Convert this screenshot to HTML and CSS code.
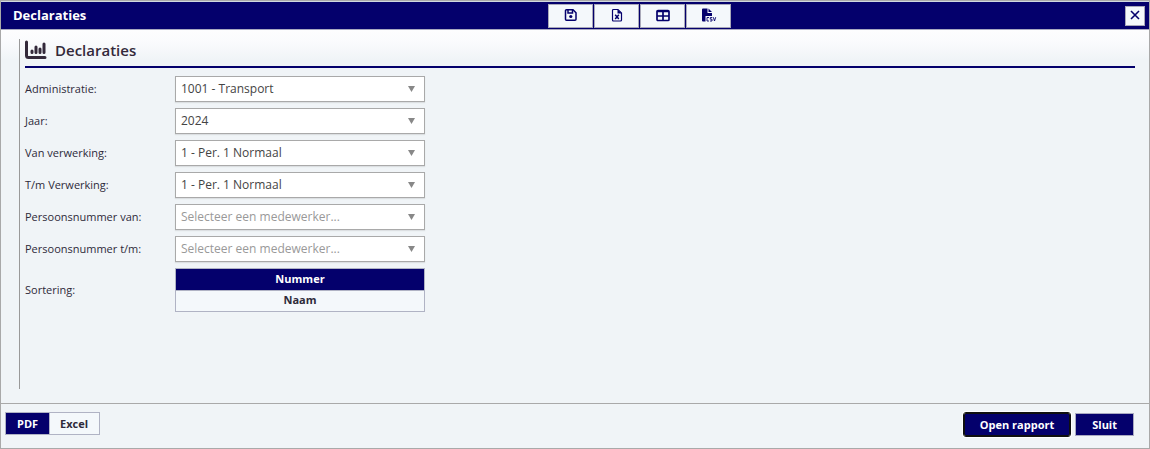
FILE: index.html
```html
<!DOCTYPE html>
<html lang="nl">
<head>
    <meta charset="UTF-8">
    <meta name="viewport" content="width=device-width, initial-scale=1.0">
    <title>Declaraties</title>
    <link rel="stylesheet" href="styles.css">
</head>
<body>
    <div class="window">
        <!-- title bar with export buttons -->
        <header class="titlebar">
            <h1 class="titlebar-title">Declaraties</h1>
            <div class="toolbar">
                <button type="button" class="tool-btn" aria-label="Opslaan">
                    <svg width="14" height="14" viewBox="0 0 14 14" fill="none" stroke="currentColor" stroke-width="1.5">
                        <path d="M2.5 1.8h6.500l3 3v6.500a1 1 0 0 1-1 1h-8.500a1 1 0 0 1-1-1v-8.500a1 1 0 0 1 1-1z"/>
                        <path d="M4 2v3h4.500v-3"/>
                        <circle cx="6.800" cy="8.500" r="1.600" fill="currentColor" stroke="none"/>
                    </svg>
                </button>
                <button type="button" class="tool-btn" aria-label="Excel">
                    <svg width="14" height="14" viewBox="0 0 14 14" fill="none" stroke="currentColor" stroke-width="1.2">
                        <path d="M3.500 1.500h4.500l3.500 3.500v7a1 1 0 0 1-1 1h-7a1 1 0 0 1-1-1v-9.500a1 1 0 0 1 1-1z"/>
                        <path d="M7.500 1.500l4 4h-4z" fill="currentColor" stroke="none"/>
                        <path d="M5.200 6.800l3.600 4.200M8.800 6.800l-3.600 4.200" stroke-width="1.500"/>
                    </svg>
                </button>
                <button type="button" class="tool-btn" aria-label="Tabel">
                    <svg width="14" height="14" viewBox="0 0 14 14" fill="none" stroke="currentColor" stroke-width="1.7">
                        <rect x="1" y="2.500" width="12" height="10" rx="1"/>
                        <path d="M1 3.500h12M1 8h12M7 3v9"/>
                    </svg>
                </button>
                <button type="button" class="tool-btn" aria-label="CSV">
                    <svg width="16" height="14" viewBox="0 0 16 14" fill="currentColor">
                        <path d="M2 .5h4.500v4.500h4.500v3h-6.500v5.500h-2.500a1 1 0 0 1-1-1v-11a1 1 0 0 1 1-1zM7.500 .5l3.500 3.500h-3.500z"/>
                        <path d="M8 9.500h-2v3.500h2M11.300 9.500h-2v1.700h1.700v1.800h-2M12.300 9.200l1.200 3.800 1.200-3.800" fill="none" stroke="currentColor" stroke-width=".9"/>
                    </svg>
                </button>
            </div>
            <button type="button" class="close-btn" aria-label="Sluiten">
                <svg width="10" height="10" viewBox="0 0 10 10" fill="none" stroke="currentColor" stroke-width="1.6">
                    <path d="M1 1l8 8M9 1l-8 8"/>
                </svg>
            </button>
        </header>

        <main class="content">
            <form class="panel" id="report-form">
                <h2 class="panel-title">
                    <svg width="22" height="20" viewBox="0 0 22 20" fill="none" stroke="currentColor" stroke-linecap="round" stroke-width="3">
                        <path d="M1.500 2v13.500a2 2 0 0 0 2 2h16.500"/>
                        <path d="M7 11v1.500M11 7v5.500M15 9v3.500M19 4v8.500"/>
                    </svg>
                    Declaraties
                </h2>

                <div class="row">
                    <label for="administratie">Administratie:</label>
                    <div class="select">
                        <select id="administratie"><option>1001 - Transport</option></select>
                    </div>
                </div>
                <div class="row">
                    <label for="jaar">Jaar:</label>
                    <div class="select">
                        <select id="jaar"><option>2024</option></select>
                    </div>
                </div>
                <div class="row">
                    <label for="van">Van verwerking:</label>
                    <div class="select">
                        <select id="van"><option>1 - Per. 1 Normaal</option></select>
                    </div>
                </div>
                <div class="row">
                    <label for="tm">T/m Verwerking:</label>
                    <div class="select">
                        <select id="tm"><option>1 - Per. 1 Normaal</option></select>
                    </div>
                </div>
                <div class="row">
                    <label for="persoon-van">Persoonsnummer van:</label>
                    <div class="select">
                        <select id="persoon-van" class="empty"><option>Selecteer een medewerker...</option></select>
                    </div>
                </div>
                <div class="row">
                    <label for="persoon-tm">Persoonsnummer t/m:</label>
                    <div class="select">
                        <select id="persoon-tm" class="empty"><option>Selecteer een medewerker...</option></select>
                    </div>
                </div>
                <div class="row" role="radiogroup" aria-labelledby="sortering">
                    <span id="sortering">Sortering:</span>
                    <div class="toggle toggle-vertical">
                        <label><input type="radio" name="sortering" checked>Nummer</label>
                        <label><input type="radio" name="sortering">Naam</label>
                    </div>
                </div>
            </form>
        </main>

        <!-- output format and actions -->
        <footer class="footer">
            <div class="toggle" role="radiogroup" aria-label="Formaat">
                <label><input type="radio" name="formaat" form="report-form" checked>PDF</label>
                <label><input type="radio" name="formaat" form="report-form">Excel</label>
            </div>
            <div class="actions">
                <button type="submit" class="btn btn-active" form="report-form">Open rapport</button>
                <button type="button" class="btn">Sluit</button>
            </div>
        </footer>
    </div>
</body>
</html>
```
FILE: styles.css
```css
* {
    box-sizing: border-box;
}
body {
    margin: 0;
    font-family: "Open Sans", "Noto Sans", sans-serif;
    font-size: 11px;
    color: #2e2a3a;
}
button, select, input {
    font-family: inherit;
}
svg {
    display: block;
}
.window {
    display: flex;
    flex-direction: column;
    min-height: 100vh;
    border: 1px solid #a9a9a9;
    background: #f0f4f7;
}

/* title bar */
.titlebar {
    display: grid;
    grid-template-columns: 141px 1fr 20px;
    align-items: center;
    height: 29px;
    padding: 0 4px 0 12px;
    background: #04006c;
    border-top: 1px solid #d0d8e0;
    border-bottom: 1px solid #a8a8c0;
}
.titlebar-title {
    margin: 0;
    padding-bottom: 2px;
    font-size: 13px;
    font-weight: bold;
    color: #fff;
}
.toolbar {
    display: flex;
    justify-self: center;
    gap: 1px;
}
.tool-btn, .close-btn {
    display: flex;
    align-items: center;
    justify-content: center;
    padding: 0;
    border: 1px solid #a9a9b9;
    background: #f4f8fb;
    color: #04006c;
}
.tool-btn {
    width: 45px;
    height: 24px;
    padding-bottom: 2px;
}
.close-btn {
    width: 20px;
    height: 20px;
    padding-bottom: 2px;
}

/* form */
.content {
    display: flex;
    flex: 1;
    padding: 9px 14px 14px 18px;
    background: linear-gradient(#fdfdfe, #fafbfd 12px, #f0f4f7 30px);
}
.panel {
    flex: 1;
    padding-left: 5px;
    border-left: 1px solid #999;
}
.panel-title {
    display: flex;
    align-items: center;
    gap: 8px;
    height: 29px;
    margin: 0 0 8px;
    padding-bottom: 6px;
    border-bottom: 2px solid #04006c;
    font-size: 15px;
    font-weight: 600;
    color: #33293a;
}
.row {
    display: grid;
    grid-template-columns: 150px 250px;
    align-items: center;
    margin-bottom: 6px;
}
.row > label, .row > span {
    padding-bottom: 2px;
}
.select {
    position: relative;
}
.select::after {
    content: "";
    position: absolute;
    top: 10px;
    right: 10px;
    width: 7px;
    height: 6px;
    background: #888;
    clip-path: polygon(0 0, 100% 0, 50% 100%);
    pointer-events: none;
}
.select select {
    display: block;
    width: 100%;
    height: 26px;
    padding: 0 24px 2px 5px;
    appearance: none;
    border: 1px solid #a9a9a9;
    border-radius: 0;
    background: #fff;
    box-shadow: 0 1px 1px #dcdfe2;
    font-size: 12px;
    color: #444;
}
.select .empty {
    color: #999;
}

/* radio groups drawn as buttons */
.toggle {
    display: flex;
    border: 1px solid #b0b3c4;
    background: #f4f8fb;
    font-weight: bold;
}
.toggle label {
    padding: 0 11px;
    line-height: 21px;
    text-align: center;
}
.toggle label + label {
    box-shadow: inset 1px 0 #b0b3c4;
}
.toggle label:has(:checked) {
    background: #04006c;
    color: #fff;
}
.toggle input {
    position: absolute;
    opacity: 0;
    pointer-events: none;
}
.toggle-vertical {
    flex-direction: column;
}
.toggle-vertical label {
    padding-bottom: 2px;
    line-height: 19px;
}
.toggle-vertical label + label {
    box-shadow: inset 0 1px #b0b3c4;
}

/* footer */
.footer {
    display: flex;
    justify-content: space-between;
    align-items: flex-start;
    height: 45px;
    padding: 8px 15px 0 4px;
    border-top: 1px solid #a9a9a9;
}
.actions {
    display: flex;
    gap: 5px;
    padding-top: 1px;
}
.btn {
    height: 23px;
    padding: 0 16px 1px;
    border: 1px solid #a9a9c0;
    background: #04006c;
    font-size: 11px;
    font-weight: bold;
    color: #fff;
}
.btn-active {
    padding: 0 15px 1px;
    border: 1px solid #101010;
    border-radius: 2px;
    outline: 1px solid #101010;
    box-shadow: 0 0 0 2px #fff;
}
```
